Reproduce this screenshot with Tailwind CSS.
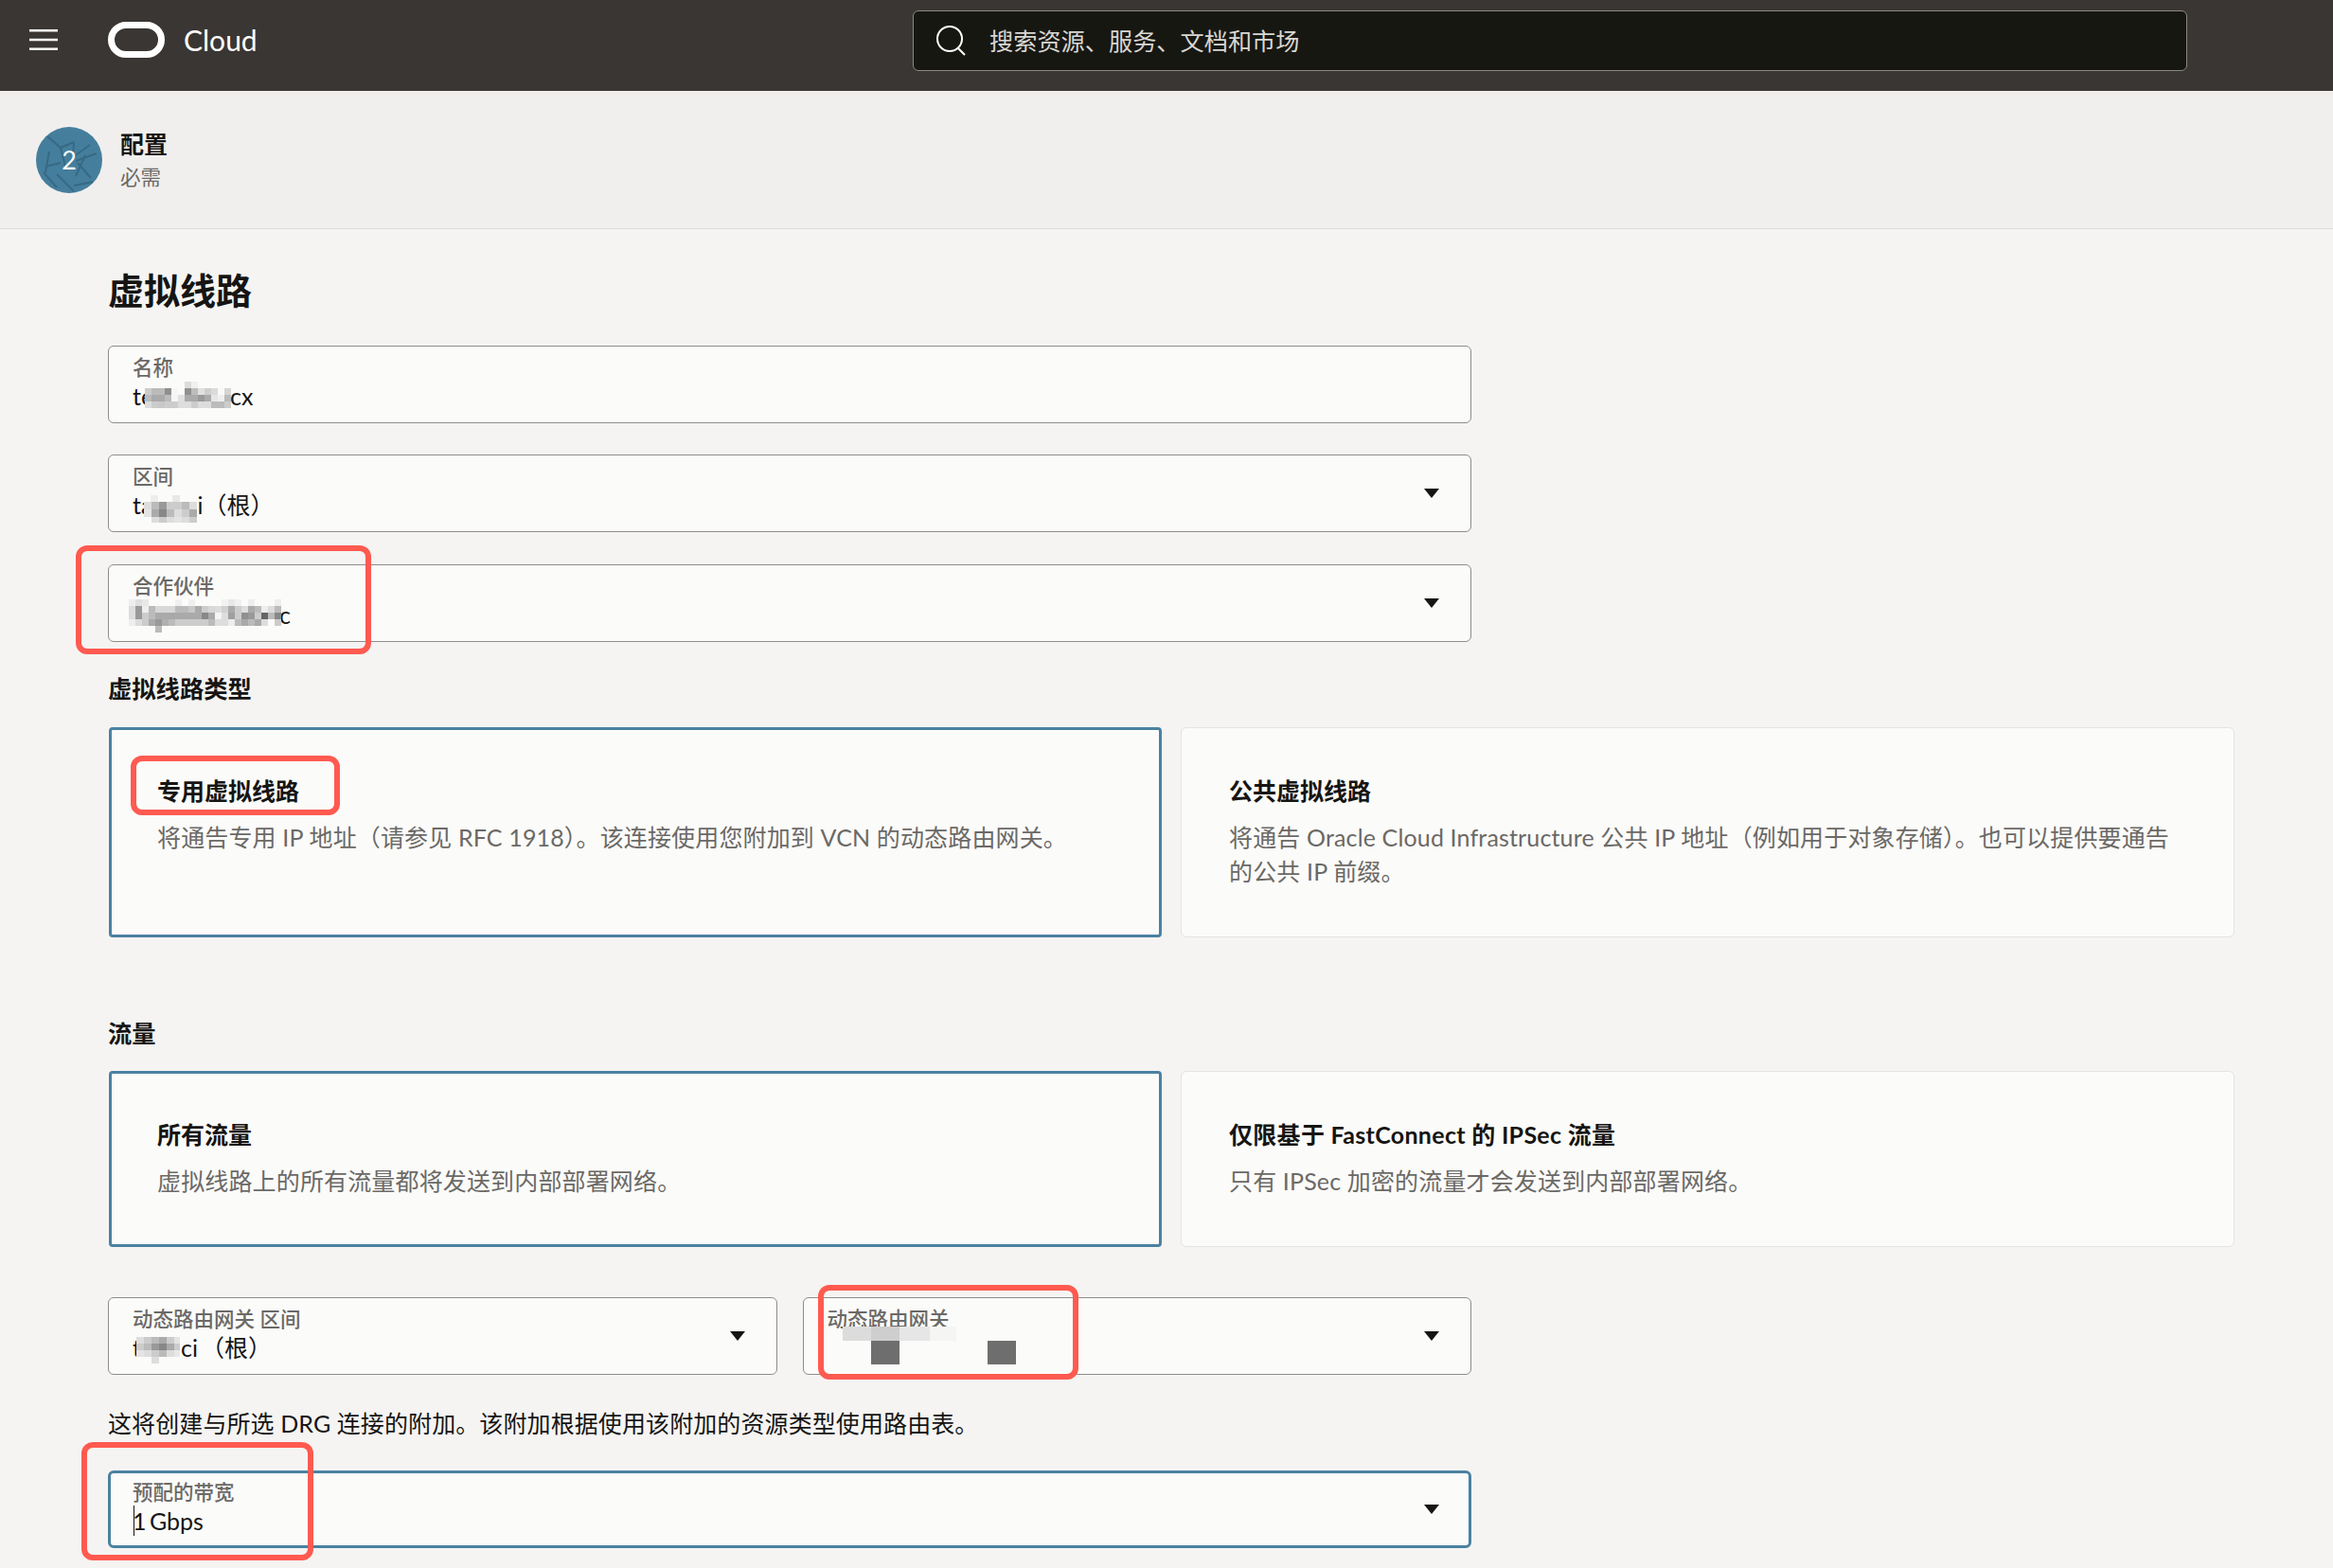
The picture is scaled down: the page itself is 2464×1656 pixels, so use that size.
<!DOCTYPE html>
<html lang="zh-CN">
<head>
<meta charset="utf-8">
<title>虚拟线路</title>
<script src="https://cdn.jsdelivr.net/npm/@tailwindcss/browser@4"></script>
</head>
<body class="m-0">
<div class="relative w-[2464px] h-[1656px] overflow-hidden bg-[#f5f4f2] text-[#161513] font-['Lato','Noto_Sans_CJK_SC',sans-serif]">

  <header class="h-[96px] bg-[#3a3633] flex items-center">
    <svg class="ml-[31px] shrink-0 mt-[-12px]" width="30" height="24" viewBox="0 0 30 24"><path d="M0 2.25h30M0 12h30M0 21.75h30" stroke="#fff" stroke-width="2.5"/></svg>
    <svg class="ml-[53px] shrink-0 mt-[-13px]" width="60" height="38" viewBox="0 0 60 38"><rect x="3.5" y="3.5" width="53" height="31" rx="15.5" fill="none" stroke="#fff" stroke-width="7"/></svg>
    <span class="ml-[20px] text-[30px] leading-[36px] text-white mt-[-12px]">Cloud</span>
    <div class="ml-auto mr-[154px] mt-[-11px] w-[1346px] h-[64px] rounded-[6px] border border-[#8b8782] bg-[#171712] flex items-center pl-[24px]">
      <svg class="shrink-0" width="31" height="32" viewBox="0 0 31 32" fill="none" stroke="#fff" stroke-width="2"><circle cx="14" cy="14" r="13"/><path d="M23 24l7 7"/></svg>
      <span class="ml-[25px] text-[25.2px] leading-[36px] text-[#d9d7d3]">搜索资源、服务、文档和市场</span>
    </div>
  </header>

  <div class="h-[146px] bg-[#f1efed] border-b border-[#dfddda] flex items-center pl-[38px]">
    <div class="relative w-[70px] h-[70px] rounded-full bg-[#457f9d] overflow-hidden flex items-center justify-center mt-[1px]">
      <svg class="absolute inset-0" width="70" height="70" viewBox="0 0 70 70" fill="none" stroke="#33657f" stroke-width="2" opacity="0.8">
        <path d="M12 10l14 12 14-6 M26 22l6 24 M14 26l-4 22 M10 42l16-4 M40 16l-1 16 18-13 M52 30l-10 22 M42 36l22-8 M44 38l14 16 M8 48l14 16 M22 50l18 18 M40 62l20-4"/>
      </svg>
      <span class="relative text-[27px] leading-[32px] text-white">2</span>
    </div>
    <div class="ml-[19px] flex flex-col">
      <span class="text-[25px] leading-[32px] font-bold">配置</span>
      <span class="mt-[4px] text-[21.5px] leading-[30px] text-[#6b6966]">必需</span>
    </div>
  </div>

  <main class="pl-[114px]">
    <h1 class="pt-[39px] mb-[34px] text-[38px] leading-[50px] font-bold">虚拟线路</h1>

    <div class="w-[1440px] flex flex-col">
      <div class="h-[82px] rounded-[6px] border-[1.5px] border-[#8f8d8a] bg-[#fbfbf9] flex items-center pl-[25px]">
        <div class="flex flex-col pb-[7px]">
          <span class="text-[21.5px] leading-[30px] font-medium text-[#6b6966]">名称</span>
          <span class="text-[25px] leading-[30px]">te<span class="inline-block w-[81px]"></span>cx</span>
        </div>
      </div>
      <div class="mt-[33px] h-[82px] rounded-[6px] border-[1.5px] border-[#8f8d8a] bg-[#fbfbf9] flex items-center justify-between pl-[25px] pr-[33px]">
        <div class="flex flex-col pb-[7px]">
          <span class="text-[21.5px] leading-[30px] font-medium text-[#6b6966]">区间</span>
          <span class="text-[25px] leading-[30px]">ta<span class="inline-block w-[47px]"></span>i（根）</span>
        </div>
        <svg width="16" height="10" viewBox="0 0 16 10"><path d="M0 0h16L8 10z" fill="#161513"/></svg>
      </div>
      <div class="mt-[34px] h-[82px] rounded-[6px] border-[1.5px] border-[#8f8d8a] bg-[#fbfbf9] flex items-center justify-between pl-[25px] pr-[33px]">
        <div class="flex flex-col pb-[7px]">
          <span class="text-[21.5px] leading-[30px] font-medium text-[#6b6966]">合作伙伴</span>
          <span class="text-[25px] leading-[30px]"><span class="inline-block w-[155px]"></span>c</span>
        </div>
        <svg width="16" height="10" viewBox="0 0 16 10"><path d="M0 0h16L8 10z" fill="#161513"/></svg>
      </div>
    </div>

    <h2 class="mt-[32px] mb-[24px] text-[25.3px] leading-[34px] font-bold">虚拟线路类型</h2>
    <div class="ml-[1px] w-[2245px] grid grid-cols-[1112px_1113px] gap-[20px]">
      <div class="h-[222px] rounded-[4px] border-[3px] border-[#4b81a1] bg-[#fbfbf9] pl-[48px] pt-[46px]">
        <div class="text-[25px] leading-[36px] font-bold">专用虚拟线路</div>
        <p class="mt-[13px] text-[25px] leading-[36px] tracking-[0.15px] text-[#6b6966]">将通告专用 IP 地址（请参见 RFC 1918）。该连接使用您附加到 VCN 的动态路由网关。</p>
      </div>
      <div class="h-[222px] rounded-[6px] border border-[#e6e4e1] bg-[#fbfbf9] pl-[50px] pr-[60px] pt-[48px]">
        <div class="text-[25px] leading-[36px] font-bold">公共虚拟线路</div>
        <p class="mt-[13px] text-[25px] leading-[36px] tracking-[0.15px] text-[#6b6966]">将通告 Oracle Cloud Infrastructure 公共 IP 地址（例如用于对象存储）。也可以提供要通告的公共 IP 前缀。</p>
      </div>
    </div>

    <h2 class="mt-[84px] mb-[23px] text-[25.3px] leading-[34px] font-bold">流量</h2>
    <div class="ml-[1px] w-[2245px] grid grid-cols-[1112px_1113px] gap-[20px]">
      <div class="h-[186px] rounded-[4px] border-[3px] border-[#4b81a1] bg-[#fbfbf9] pl-[48px] pt-[46px]">
        <div class="text-[25px] leading-[36px] font-bold">所有流量</div>
        <p class="mt-[13px] text-[25px] leading-[36px] tracking-[0.15px] text-[#6b6966]">虚拟线路上的所有流量都将发送到内部部署网络。</p>
      </div>
      <div class="h-[186px] rounded-[6px] border border-[#e6e4e1] bg-[#fbfbf9] pl-[50px] pr-[51px] pt-[48px]">
        <div class="text-[25px] leading-[36px] font-bold tracking-[0.3px]">仅限基于 FastConnect 的 IPSec 流量</div>
        <p class="mt-[13px] text-[25px] leading-[36px] tracking-[0.15px] text-[#6b6966]">只有 IPSec 加密的流量才会发送到内部部署网络。</p>
      </div>
    </div>

    <div class="mt-[53px] w-[1440px] flex gap-[27px]">
      <div class="flex-1 h-[82px] rounded-[6px] border-[1.5px] border-[#8f8d8a] bg-[#fbfbf9] flex items-center justify-between pl-[25px] pr-[33px]">
        <div class="flex flex-col pb-[7px]">
          <span class="text-[21.5px] leading-[30px] font-medium text-[#6b6966]">动态路由网关 区间</span>
          <span class="text-[25px] leading-[30px]">t<span class="inline-block w-[42px]"></span>ci<span class="inline-block w-[3px]"></span>（根）</span>
        </div>
        <svg width="16" height="10" viewBox="0 0 16 10"><path d="M0 0h16L8 10z" fill="#161513"/></svg>
      </div>
      <div class="flex-1 h-[82px] rounded-[6px] border-[1.5px] border-[#8f8d8a] bg-[#fbfbf9] flex items-center justify-between pl-[25px] pr-[33px]">
        <div class="flex flex-col pb-[7px]">
          <span class="text-[21.5px] leading-[30px] font-medium text-[#6b6966]">动态路由网关</span>
          <span class="h-[30px]"></span>
        </div>
        <svg width="16" height="10" viewBox="0 0 16 10"><path d="M0 0h16L8 10z" fill="#161513"/></svg>
      </div>
    </div>

    <p class="mt-[33px] text-[25px] leading-[36px] tracking-[0.1px]">这将创建与所选 DRG 连接的附加。该附加根据使用该附加的资源类型使用路由表。</p>

    <div class="mt-[32px] w-[1440px] h-[82px] rounded-[6px] border-[3px] border-[#4b81a1] bg-[#fbfbf9] flex items-center justify-between pl-[23px] pr-[31px]">
      <div class="flex flex-col pb-[6px]">
        <span class="text-[21.5px] leading-[30px] font-medium text-[#6b6966]">预配的带宽</span>
        <span class="relative text-[25px] leading-[30px] [word-spacing:-3px] before:content-[''] before:absolute before:left-[1px] before:top-[-1px] before:w-[1px] before:h-[32px] before:bg-[#161513]">1 Gbps</span>
      </div>
      <svg width="16" height="10" viewBox="0 0 16 10"><path d="M0 0h16L8 10z" fill="#161513"/></svg>
    </div>
  </main>

  <!-- pixelated redactions laid over the values -->
  <svg class="absolute left-0 top-0 pointer-events-none" width="2464" height="1656" shape-rendering="crispEdges">
    <g transform="translate(153,403)">
      <rect x="42" width="7" height="7" fill="#dcdcdb"/><rect x="49" width="7" height="7" fill="#f0f0ef"/>
      <g transform="translate(0,7)"><rect x="0" width="7" height="7" fill="#ccc"/><rect x="7" width="7" height="7" fill="#bbb"/><rect x="14" width="7" height="7" fill="#bbb"/><rect x="21" width="7" height="7" fill="#8f8f8f"/><rect x="28" width="7" height="7" fill="#f5f5f5"/><rect x="35" width="7" height="7" fill="#fbfbfa"/><rect x="42" width="7" height="7" fill="#909090"/><rect x="49" width="7" height="7" fill="#bdbdbd"/><rect x="56" width="7" height="7" fill="#e0e0e0"/><rect x="63" width="7" height="7" fill="#cfcfcf"/><rect x="70" width="7" height="7" fill="#dbdbdb"/><rect x="77" width="7" height="7" fill="#fafafa"/><rect x="84" width="7" height="7" fill="#d5d5d5"/></g>
      <g transform="translate(0,14)"><rect x="0" width="7" height="7" fill="#bbb"/><rect x="7" width="7" height="7" fill="#aaa"/><rect x="14" width="7" height="7" fill="#aaa"/><rect x="21" width="7" height="7" fill="#bbb"/><rect x="28" width="7" height="7" fill="#f5f5f5"/><rect x="35" width="7" height="7" fill="#e0e0e0"/><rect x="42" width="7" height="7" fill="#aaa"/><rect x="49" width="7" height="7" fill="#aaa"/><rect x="56" width="7" height="7" fill="#9a9a9a"/><rect x="63" width="7" height="7" fill="#ababab"/><rect x="70" width="7" height="7" fill="#e6e6e6"/><rect x="77" width="7" height="7" fill="#eee"/><rect x="84" width="7" height="7" fill="#bbb"/></g>
      <g transform="translate(0,21)"><rect x="0" width="7" height="7" fill="#ddd"/><rect x="7" width="7" height="7" fill="#ccc"/><rect x="14" width="7" height="7" fill="#c8c8c8"/><rect x="21" width="7" height="7" fill="#ccc"/><rect x="28" width="7" height="7" fill="#ccc"/><rect x="35" width="7" height="7" fill="#ddd"/><rect x="42" width="7" height="7" fill="#ddd"/><rect x="49" width="7" height="7" fill="#ccc"/><rect x="56" width="7" height="7" fill="#ddd"/><rect x="63" width="7" height="7" fill="#ddd"/><rect x="70" width="7" height="7" fill="#bbb"/><rect x="77" width="7" height="7" fill="#bbb"/><rect x="84" width="7" height="7" fill="#ccc"/></g>
    </g>
    <g transform="translate(152,523)">
      <rect x="7" width="8" height="7" fill="#eee"/><rect x="30" width="8" height="7" fill="#e8e8e8"/>
      <g transform="translate(0,7)"><rect x="0" width="8" height="8" fill="#ddd"/><rect x="8" width="8" height="8" fill="#bbb"/><rect x="16" width="8" height="8" fill="#999"/><rect x="24" width="8" height="8" fill="#ccc"/><rect x="32" width="8" height="8" fill="#ccc"/><rect x="40" width="8" height="8" fill="#bbb"/><rect x="48" width="8" height="8" fill="#ddd"/></g>
      <g transform="translate(0,15)"><rect x="0" width="8" height="8" fill="#e4e4e4"/><rect x="8" width="8" height="8" fill="#aaa"/><rect x="16" width="8" height="8" fill="#888"/><rect x="24" width="8" height="8" fill="#bbb"/><rect x="32" width="8" height="8" fill="#ddd"/><rect x="40" width="8" height="8" fill="#ccc"/><rect x="48" width="8" height="8" fill="#aaa"/></g>
      <g transform="translate(0,23)"><rect x="8" width="8" height="6" fill="#ddd"/><rect x="16" width="8" height="6" fill="#ccc"/><rect x="24" width="8" height="6" fill="#ddd"/><rect x="32" width="8" height="6" fill="#e4e4e4"/><rect x="40" width="8" height="6" fill="#ddd"/><rect x="48" width="8" height="6" fill="#ccc"/></g>
    </g>
    <g transform="translate(136,633)">
      <rect x="0" width="7" height="7" fill="#eee"/><rect x="7" width="7" height="7" fill="#e0e0e0"/><rect x="14" width="7" height="7" fill="#e8e8e8"/><rect x="49" width="7" height="7" fill="#f0f0f0"/><rect x="63" width="7" height="7" fill="#f0f0f0"/><rect x="98" width="7" height="7" fill="#f2f2f2"/><rect x="105" width="7" height="7" fill="#e8e8e8"/><rect x="112" width="7" height="7" fill="#f0f0f0"/><rect x="126" width="7" height="7" fill="#eee"/><rect x="154" width="7" height="7" fill="#eee"/>
      <g transform="translate(0,7)"><rect x="0" width="7" height="7" fill="#ddd"/><rect x="7" width="7" height="7" fill="#999"/><rect x="14" width="7" height="7" fill="#eee"/><rect x="21" width="7" height="7" fill="#bbb"/><rect x="28" width="7" height="7" fill="#d8d8d8"/><rect x="35" width="7" height="7" fill="#d8d8d8"/><rect x="42" width="7" height="7" fill="#d8d8d8"/><rect x="49" width="7" height="7" fill="#bbb"/><rect x="56" width="7" height="7" fill="#bbb"/><rect x="63" width="7" height="7" fill="#c8c8c8"/><rect x="70" width="7" height="7" fill="#aaa"/><rect x="77" width="7" height="7" fill="#ccc"/><rect x="84" width="7" height="7" fill="#d8d8d8"/><rect x="91" width="7" height="7" fill="#ddd"/><rect x="98" width="7" height="7" fill="#d0d0d0"/><rect x="105" width="7" height="7" fill="#aaa"/><rect x="112" width="7" height="7" fill="#ccc"/><rect x="119" width="7" height="7" fill="#ddd"/><rect x="126" width="7" height="7" fill="#aaa"/><rect x="133" width="7" height="7" fill="#bbb"/><rect x="140" width="7" height="7" fill="#eee"/><rect x="147" width="7" height="7" fill="#ddd"/><rect x="154" width="7" height="7" fill="#bbb"/></g>
      <g transform="translate(0,14)"><rect x="0" width="7" height="7" fill="#ddd"/><rect x="7" width="7" height="7" fill="#999"/><rect x="14" width="7" height="7" fill="#ccc"/><rect x="21" width="7" height="7" fill="#bbb"/><rect x="28" width="7" height="7" fill="#aaa"/><rect x="35" width="7" height="7" fill="#aaa"/><rect x="42" width="7" height="7" fill="#a8a8a8"/><rect x="49" width="7" height="7" fill="#aaa"/><rect x="56" width="7" height="7" fill="#aaa"/><rect x="63" width="7" height="7" fill="#aaa"/><rect x="70" width="7" height="7" fill="#aaa"/><rect x="77" width="7" height="7" fill="#888"/><rect x="84" width="7" height="7" fill="#aaa"/><rect x="91" width="7" height="7" fill="#f5f5f5"/><rect x="98" width="7" height="7" fill="#ddd"/><rect x="105" width="7" height="7" fill="#a0a0a0"/><rect x="112" width="7" height="7" fill="#ccc"/><rect x="119" width="7" height="7" fill="#909090"/><rect x="126" width="7" height="7" fill="#999"/><rect x="133" width="7" height="7" fill="#ccc"/><rect x="140" width="7" height="7" fill="#666"/><rect x="147" width="7" height="7" fill="#bbb"/><rect x="154" width="7" height="7" fill="#888"/></g>
      <g transform="translate(0,21)"><rect x="0" width="7" height="7" fill="#eee"/><rect x="7" width="7" height="7" fill="#ddd"/><rect x="14" width="7" height="7" fill="#ccc"/><rect x="21" width="7" height="7" fill="#aaa"/><rect x="28" width="7" height="7" fill="#999"/><rect x="35" width="7" height="7" fill="#b0b0b0"/><rect x="42" width="7" height="7" fill="#bbb"/><rect x="49" width="35" height="7" fill="#ccc"/><rect x="84" width="7" height="7" fill="#bbb"/><rect x="91" width="14" height="7" fill="#ddd"/><rect x="105" width="7" height="7" fill="#eee"/><rect x="112" width="7" height="7" fill="#bbb"/><rect x="119" width="7" height="7" fill="#aaa"/><rect x="126" width="7" height="7" fill="#bbb"/><rect x="133" width="7" height="7" fill="#aaa"/><rect x="140" width="7" height="7" fill="#ddd"/><rect x="154" width="7" height="7" fill="#ccc"/></g>
      <rect x="28" y="28" width="7" height="7" fill="#bbb"/>
    </g>
    <g transform="translate(144,1412)">
      <rect x="0" width="8" height="7" fill="#ddd"/><rect x="8" width="8" height="7" fill="#ccc"/><rect x="16" width="8" height="7" fill="#bbb"/><rect x="24" width="8" height="7" fill="#aaa"/><rect x="32" width="8" height="7" fill="#ccc"/><rect x="40" width="6" height="7" fill="#e4e4e4"/>
      <g transform="translate(0,7)"><rect x="0" width="8" height="7" fill="#ccc"/><rect x="8" width="8" height="7" fill="#bbb"/><rect x="16" width="8" height="7" fill="#999"/><rect x="24" width="8" height="7" fill="#888"/><rect x="32" width="8" height="7" fill="#aaa"/><rect x="40" width="6" height="7" fill="#ccc"/></g>
      <g transform="translate(0,14)"><rect x="0" width="8" height="7" fill="#e4e4e4"/><rect x="8" width="8" height="7" fill="#ddd"/><rect x="16" width="8" height="7" fill="#ccc"/><rect x="24" width="8" height="7" fill="#bbb"/><rect x="32" width="8" height="7" fill="#ddd"/><rect x="40" width="6" height="7" fill="#e8e8e8"/></g>
      <rect x="16" y="21" width="8" height="7" fill="#ddd"/>
    </g>
    <g>
      <rect x="890" y="1401" width="30" height="15" fill="#dcdcdc"/><rect x="920" y="1401" width="30" height="15" fill="#cecece"/><rect x="950" y="1401" width="32" height="15" fill="#e6e6e6"/><rect x="982" y="1401" width="28" height="15" fill="#f5f5f4"/>
      <rect x="920" y="1416" width="30" height="25" fill="#6e6e6e"/><rect x="1043" y="1416" width="30" height="25" fill="#6e6e6e"/>
    </g>
  </svg>

  <!-- red call-outs drawn on the screenshot -->
  <div class="absolute left-[80px] top-[576px] w-[312px] h-[115px] rounded-[12px] border-[6px] border-[#ff5a50]"></div>
  <div class="absolute left-[138px] top-[798px] w-[221px] h-[63px] rounded-[12px] border-[6px] border-[#ff5a50]"></div>
  <div class="absolute left-[864px] top-[1357px] w-[275px] h-[100px] rounded-[12px] border-[6px] border-[#ff5a50]"></div>
  <div class="absolute left-[86px] top-[1523px] w-[245px] h-[125px] rounded-[12px] border-[6px] border-[#ff5a50]"></div>
</div>
</body>
</html>
